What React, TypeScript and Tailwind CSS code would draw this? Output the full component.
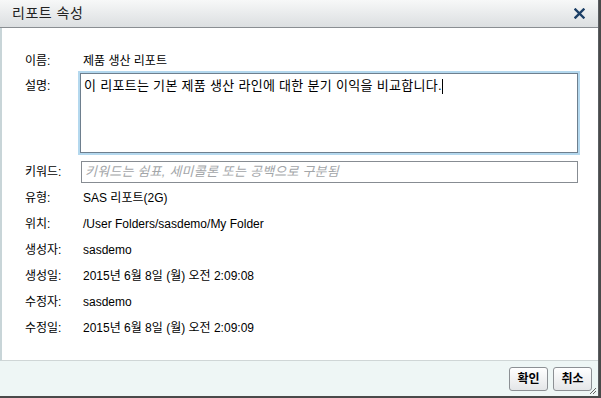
import React from 'react';

const font = { fontFamily: '"Liberation Sans", "Noto Sans CJK KR", sans-serif' };

const rows: [string, string][] = [
  ['유형:', 'SAS 리포트(2G)'],
  ['위치:', '/User Folders/sasdemo/My Folder'],
  ['생성자:', 'sasdemo'],
  ['생성일:', '2015년 6월 8일 (월) 오전 2:09:08'],
  ['수정자:', 'sasdemo'],
  ['수정일:', '2015년 6월 8일 (월) 오전 2:09:09'],
];

function Label({ children }: { children: React.ReactNode }) {
  return <div className="w-[58px] shrink-0 text-[12px] text-black">{children}</div>;
}

export default function App() {
  return (
    <div className="w-[601px] h-[398px] bg-[#4a4a4a] overflow-hidden" style={font}>
      <div className="w-[599px] h-[396px] flex flex-col bg-white border-r border-[#5a5e62]">
        {/* title bar */}
        <div className="h-[28px] shrink-0 flex items-center justify-between pl-[12px] pr-[13px] bg-gradient-to-b from-[#f7f8f8] to-[#dcdfe1] border-b border-[#8a8e92]">
          <span className="text-[14px] text-[#222] tracking-[0.5px]">리포트 속성</span>
          <svg width="11" height="11" viewBox="0 0 11 11">
            <path d="M1.5 1.5 L9.5 9.5 M9.5 1.5 L1.5 9.5" stroke="#1c3f66" strokeWidth="2.4" strokeLinecap="square" />
          </svg>
        </div>

        {/* body */}
        <div className="flex-1 flex flex-col pl-[23px] pt-[20px] border-l-2 border-[#c8d5d8] border-b border-b-[#cfd6d6]">
          <div className="h-[26px] flex items-center">
            <Label>이름:</Label>
            <span className="text-[12px] text-black">제품 생산 리포트</span>
          </div>

          <div className="flex -mt-px">
            <div className="h-[26px] flex items-center">
              <Label>설명:</Label>
            </div>
            <div className="-ml-[3px] w-[498px] h-[80px] border border-[#6e7f8e] shadow-[0_0_0_2px_#b4d8ee] pl-[3px] pt-[2px] text-[13px] tracking-[0.3px] text-black">
              이 리포트는 기본 제품 생산 라인에 대한 분기 이익을 비교합니다.
              <span className="inline-block w-px h-[15px] bg-black align-middle" />
            </div>
          </div>

          <div className="flex items-center mt-[8px]">
            <Label>키워드:</Label>
            <div className="-ml-[2px] w-[497px] h-[22px] border border-[#878c92] flex items-center pl-[3px] text-[13px] tracking-[0.2px] italic text-[#a3a6a9]">
              키워드는 쉼표, 세미콜론 또는 공백으로 구분됨
            </div>
          </div>

          <div className="flex flex-col mt-[2px]">
            {rows.map(([k, v]) => (
              <div key={k} className="h-[26px] flex items-center">
                <Label>{k}</Label>
                <span className="text-[12px] text-black">{v}</span>
              </div>
            ))}
          </div>
        </div>

        {/* footer */}
        <div className="h-[35px] shrink-0 bg-[#eef6f5] relative flex items-center justify-end gap-[5px] pr-[6px]">
          <button className="w-[39px] h-[24px] rounded-[3px] border border-[#8c9094] bg-gradient-to-b from-white to-[#e4e6e8] text-[12px] font-bold text-black">
            확인
          </button>
          <button className="w-[39px] h-[24px] rounded-[3px] border border-[#8c9094] bg-gradient-to-b from-white to-[#e4e6e8] text-[12px] font-bold text-black">
            취소
          </button>
          <svg className="absolute right-[1px] bottom-[1px]" width="8" height="8" viewBox="0 0 8 8">
            <path d="M7 1 L1 7 M7 4 L4 7" stroke="#666" strokeWidth="1" />
          </svg>
        </div>
      </div>
    </div>
  );
}
